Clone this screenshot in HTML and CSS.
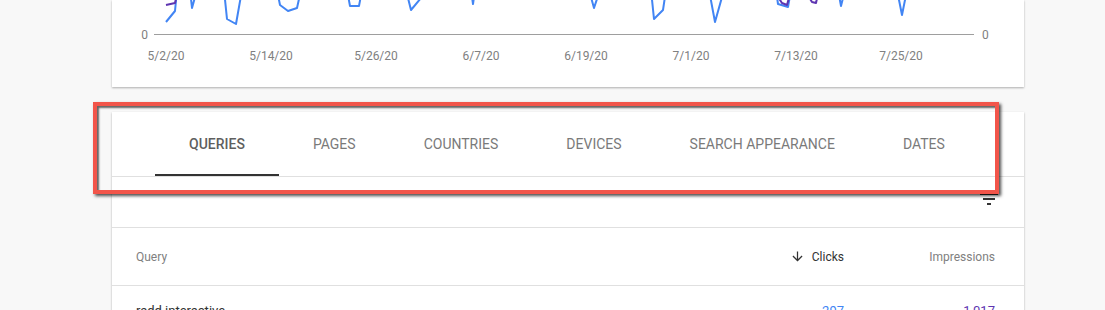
FILE: index.html
```html
<!DOCTYPE html>
<html lang="en">
<head>
  <title>Performance — Search Console</title>
  <meta charset="UTF-8">
  <link rel="stylesheet" href="styles.css">
</head>
<body>
<div class="page">
  <div class="card chart-card">
    <svg class="chart" width="912" height="87" viewBox="112 0 912 87">
      <line x1="154" y1="34.5" x2="974" y2="34.5" stroke="#9e9e9e" stroke-width="1"/>
      <text class="axis" x="148" y="35" text-anchor="end">0</text>
      <text class="axis" x="982" y="35">0</text>

      <polyline class="line clicks" points="166,22 175,11 177,-10 190,-10 192,8 197,-10 224,-10 227,19 236,24 242,-10 277,-10 280,5 288,11 297,8 301,-10 347,-10 350,6 359,6 362,-10 406,-10 411,10 421,-2 423,-10 471,-10 473,4 475,-10 589,-10 594,8 600,-10 651,-10 654,19 663,10 666,-10 709,-10 715,22 724,-10 776,-10 778,4 788,7 791,-10 838,-10 841,6 845,-10 897,-10 902,15 907,-10"/>
      <polyline class="line impressions" points="166,5 175,3 178,-10"/>
      <polyline class="line impressions" points="776,-6 782,3 787,5 790,-6"/>
      <polyline class="line impressions" points="807,-6 812,2 816,3 818,-6"/>

      <text class="axis" x="166" y="56" text-anchor="middle">5/2/20</text>
      <text class="axis" x="271" y="56" text-anchor="middle">5/14/20</text>
      <text class="axis" x="376" y="56" text-anchor="middle">5/26/20</text>
      <text class="axis" x="481" y="56" text-anchor="middle">6/7/20</text>
      <text class="axis" x="586" y="56" text-anchor="middle">6/19/20</text>
      <text class="axis" x="691" y="56" text-anchor="middle">7/1/20</text>
      <text class="axis" x="796" y="56" text-anchor="middle">7/13/20</text>
      <text class="axis" x="901" y="56" text-anchor="middle">7/25/20</text>
    </svg>
  </div>

  <div class="card table-card">
    <div class="tabs">
      <div class="tab active">QUERIES</div>
      <div class="tab">PAGES</div>
      <div class="tab">COUNTRIES</div>
      <div class="tab">DEVICES</div>
      <div class="tab">SEARCH APPEARANCE</div>
      <div class="tab">DATES</div>
    </div>

    <div class="toolbar">
      <svg class="filter" width="24" height="24" viewBox="0 0 24 24">
        <path d="M10 18h4v-2h-4v2zM3 6v2h18V6H3zm3 7h12v-2H6v2z"/>
      </svg>
    </div>

    <div class="row head">
      <div class="col-query">Query</div>
      <div class="col-num sorted">
        <svg width="15" height="15" viewBox="0 0 24 24">
          <path d="M20 12l-1.41-1.41L13 16.17V4h-2v12.17l-5.58-5.59L4 12l8 8 8-8z"/>
        </svg>
        Clicks
      </div>
      <div class="col-num">Impressions</div>
    </div>

    <div class="row">
      <div class="col-query">radd interactive</div>
      <div class="col-num clicks-val">297</div>
      <div class="col-num impr-val">1,017</div>
    </div>
  </div>
</div>

<div class="highlight"></div>
</body>
</html>
```

FILE: styles.css
```css
body {
  margin: 0;
  background: #f8f8f8;
  font-family: Roboto, "Liberation Sans", sans-serif;
}

.page {
  width: 912px;
  margin-left: 112px;
}

.card {
  background: #fff;
  box-shadow: 0 1px 2px rgba(0, 0, 0, 0.3);
}

.chart-card {
  height: 87px;
  overflow: hidden;
}

.chart {
  display: block;
}

.chart .axis {
  font-family: Roboto, sans-serif;
  font-size: 12px;
  fill: #808080;
  dominant-baseline: central;
}

.chart .line {
  fill: none;
  stroke-width: 2;
  stroke-linejoin: round;
}

.chart .clicks {
  stroke: #4285f4;
}

.chart .impressions {
  stroke: #5e35b1;
}

.table-card {
  margin-top: 25px;
  height: 260px;
}

.tabs {
  display: flex;
  padding-left: 43px;
  border-bottom: 1px solid #e0e0e0;
}

.tab {
  height: 64px;
  padding: 0 34px;
  box-sizing: border-box;
  display: flex;
  align-items: center;
  font-size: 14px;
  color: #7a7a7a;
}

.tab.active {
  color: #5f5f5f;
  font-weight: 500;
  box-shadow: inset 0 -2px 0 #333;
}

.toolbar {
  height: 51px;
  box-sizing: border-box;
  padding: 10px 23px 0 0;
  display: flex;
  justify-content: flex-end;
  border-bottom: 1px solid #e0e0e0;
}

.filter {
  fill: #333;
}

.row {
  display: grid;
  grid-template-columns: 1fr 160px 151px;
  align-items: center;
  height: 48px;
  padding: 0 29px 0 24px;
  font-size: 13px;
  color: #333;
}

.row.head {
  height: 57px;
  font-size: 12px;
  color: #808080;
  border-bottom: 1px solid #e0e0e0;
}

.col-num {
  text-align: right;
}

.sorted {
  display: flex;
  align-items: center;
  justify-content: flex-end;
  gap: 7px;
  color: #333;
}

.sorted svg {
  fill: #333;
}

.clicks-val {
  color: #4285f4;
}

.impr-val {
  color: #5e35b1;
}

.highlight {
  position: absolute;
  left: 93px;
  top: 102px;
  width: 906px;
  height: 92px;
  box-sizing: border-box;
  border: 4px solid #f2554a;
  box-shadow: 2px 2px 3px rgba(0, 0, 0, 0.7), inset 2px 2px 2px rgba(0, 0, 0, 0.6);
}
```
